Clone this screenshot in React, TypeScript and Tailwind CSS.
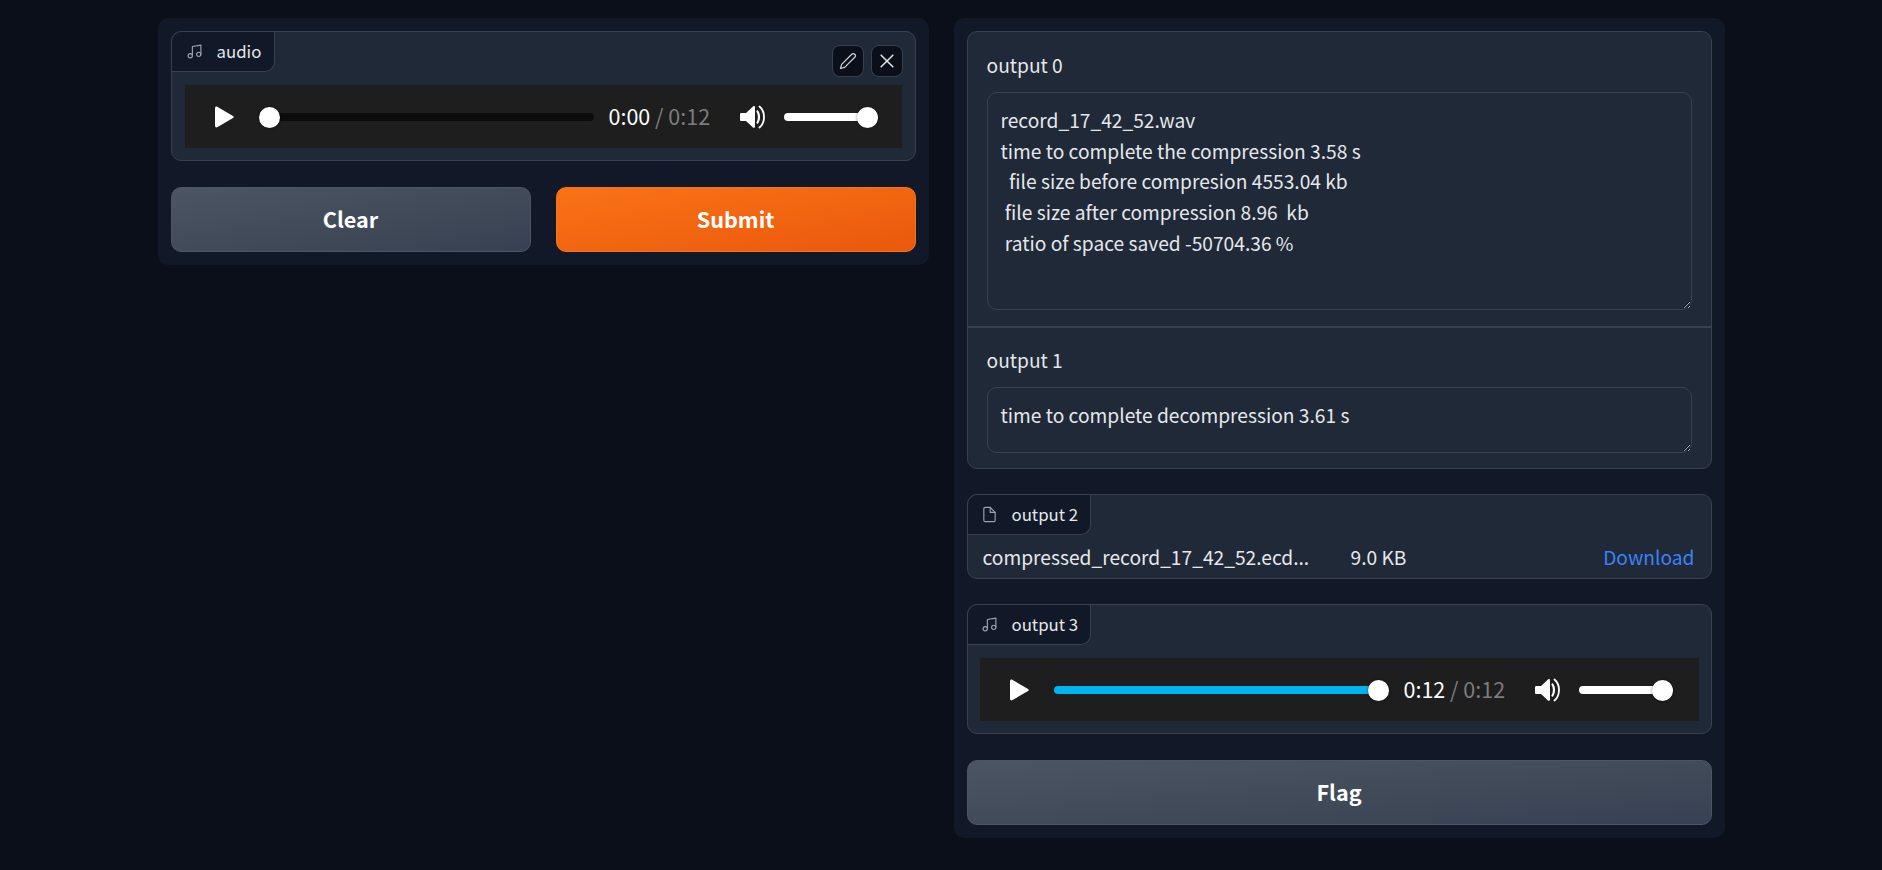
import React from "react";

const Music = () => (
  <svg width="17" height="17" viewBox="0 0 24 24" fill="none" stroke="currentColor" strokeWidth="1.6" strokeLinecap="round" strokeLinejoin="round" className="text-[#9ca3af] shrink-0">
    <path d="M9 18V5l12-2v13" />
    <circle cx="6" cy="18" r="3" />
    <circle cx="18" cy="16" r="3" />
  </svg>
);

const FileIcon = () => (
  <svg width="17" height="17" viewBox="0 0 24 24" fill="none" stroke="currentColor" strokeWidth="1.6" strokeLinecap="round" strokeLinejoin="round" className="text-[#9ca3af] shrink-0">
    <path d="M13 2H6a2 2 0 0 0-2 2v16a2 2 0 0 0 2 2h12a2 2 0 0 0 2-2V9z" />
    <polyline points="13 2 13 9 20 9" />
  </svg>
);

const Label = ({ icon, text, wide }: { icon: React.ReactNode; text: string; wide?: boolean }) => (
  <div className={`flex items-center h-10 bg-[#111827] border-r border-b border-[#374151] rounded-br-[10px] rounded-tl-[10px] text-[16.8px] text-[#e5e7eb] ${wide ? "w-[123px] pl-[13px] gap-[14px]" : "w-[103px] pl-[14px] gap-[14px]"}`}>
    {icon}
    <span className="leading-none -mt-px">{text}</span>
  </div>
);

const Player = ({ done, current }: { done?: boolean; current: string }) => (
  <div className="flex items-center h-[63px] bg-[#1e1e1e] pl-[29px]">
    <svg width="20" height="22" viewBox="0 0 20 22" className="shrink-0">
      <path d="M1 2.2 C1 0.6 2.4 0.2 3.6 0.9 L19 10 C20 10.6 20 11.4 19 12 L3.6 21.1 C2.4 21.8 1 21.400 1 19.800 Z" fill="#fff" />
    </svg>
    <div className="relative ml-[25px] w-[335px] h-5 flex items-center shrink-0">
      <div className={`h-2 w-full rounded-full ${done ? "bg-[#00b4f0]" : "bg-[#0b0b0b]"}`} />
      <div className={`absolute top-0 w-[21px] h-[21px] rounded-full bg-white shadow-[0_0_3px_rgba(0,0,0,0.5)] ${done ? "right-0" : "left-0"}`} />
    </div>
    <div className="ml-[15px] w-[120px] text-[21.5px] leading-none whitespace-pre -mt-px shrink-0">
      <span className="text-white">{current}</span>
      <span className="text-[#7d7d7d]"> / 0:12</span>
    </div>
    <svg width="26" height="24" viewBox="0 0 26 24" className="ml-[11px] shrink-0">
      <path d="M1 8 H6 L13 1.500 C14 0.700 15 1.200 15 2.500 V21.500 C15 22.800 14 23.300 13 22.500 L6 16 H1.500 C0.500 16 0 15.500 0 14.500 V9.500 C0 8.500 0.500 8 1.500 8 Z" fill="#fff" />
      <path d="M17.500 6.500 C19.500 9.500 19.500 14.500 17.500 17.500" fill="none" stroke="#fff" strokeWidth="2.200" strokeLinecap="round" />
      <path d="M19.500 1.500 C25.500 6.500 25.500 17.500 19.500 22.500" fill="none" stroke="#fff" strokeWidth="1.800" strokeLinecap="round" />
    </svg>
    <div className="relative ml-[18px] w-[94px] h-5 flex items-center shrink-0">
      <div className="h-2 w-full rounded-full bg-white" />
      <div className="absolute right-0 top-0 w-[21px] h-[21px] rounded-full bg-white shadow-[0_0_3px_rgba(0,0,0,0.5)]" />
    </div>
  </div>
);

const Btn = ({ text, primary, cls }: { text: string; primary?: boolean; cls?: string }) => (
  <button className={`h-[65px] rounded-[10px] border text-[21.6px] font-semibold text-white ${primary ? "bg-gradient-to-br from-[#f97316] to-[#ea580c] border-[#f97316]" : "bg-gradient-to-br from-[#4b5563] to-[#374151] border-[#4b5563]"} ${cls ?? ""}`}>
    {text}
  </button>
);

const output0 = `record_17_42_52.wav
time to complete the compression 3.58 s
  file size before compresion 4553.04 kb
 file size after compression 8.96  kb
 ratio of space saved -50704.36 %`;

const Field = ({ label, value, h }: { label: string; value: string; h: string }) => (
  <div className="px-[19px] pt-[19px]">
    <div className="text-[19.2px] leading-[28px] text-[#e5e7eb] mb-[13px]">{label}</div>
    <textarea
      readOnly
      defaultValue={value}
      className={`block w-full ${h} overflow-hidden rounded-[10px] border border-[#374151] bg-[#1f2937] px-[13px] py-[12px] text-[19.2px] leading-[30.7px] text-[#e5e7eb] outline-none`}
    />
  </div>
);

export default function App() {
  return (
    <div
      className="min-h-[870px] bg-[#0b0f19] flex justify-center items-start gap-[25px] pt-[18px] pl-[-1px]"
      style={{ fontFamily: '"Noto Sans CJK SC", "Noto Sans", sans-serif' }}
    >
      <div className="w-[771px] bg-[#111827] rounded-[10px] p-[13px]">
        <div className="relative h-[130px] bg-[#1f2937] border border-[#374151] rounded-[10px]">
          <Label icon={<Music />} text="audio" />
          <div className="absolute right-[12px] top-[13px] flex gap-[7px]">
            <div className="w-8 h-8 rounded-[8px] bg-[#0b0f19] border border-[#374151] flex items-center justify-center">
              <svg width="18" height="18" viewBox="0 0 24 24" fill="none" stroke="#d1d5db" strokeWidth="1.600" strokeLinecap="round" strokeLinejoin="round">
                <path d="M17 3a2.828 2.828 0 1 1 4 4L7.500 20.500 2 22l1.500-5.500L17 3z" />
              </svg>
            </div>
            <div className="w-8 h-8 rounded-[8px] bg-[#0b0f19] border border-[#374151] flex items-center justify-center">
              <svg width="20" height="20" viewBox="0 0 24 24" fill="none" stroke="#e5e7eb" strokeWidth="1.800" strokeLinecap="round" strokeLinejoin="round">
                <line x1="5" y1="5" x2="19" y2="19" />
                <line x1="19" y1="5" x2="5" y2="19" />
              </svg>
            </div>
          </div>
          <div className="mt-[13px] mx-[13px]">
            <Player current="0:00" />
          </div>
        </div>
        <div className="flex gap-[25px] mt-[26px]">
          <Btn text="Clear" cls="flex-1" />
          <Btn text="Submit" primary cls="flex-1" />
        </div>
      </div>

      <div className="w-[771px] bg-[#111827] rounded-[10px] p-[13px]">
        <div className="bg-[#1f2937] border border-[#374151] rounded-[10px] h-[438px]">
          <Field label="output 0" value={output0} h="h-[218px]" />
          <div className="h-[2px] bg-[#374151] mt-[16px]" />
          <div className="-mt-[1px]">
            <Field label="output 1" value="time to complete decompression 3.61 s" h="h-[66px]" />
          </div>
        </div>

        <div className="mt-[25px] h-[85px] bg-[#1f2937] border border-[#374151] rounded-[10px]">
          <Label icon={<FileIcon />} text="output 2" wide />
          <div className="flex items-center h-[44px] pl-[15px] pr-[16px] text-[19.2px] text-[#e5e7eb]">
            <span className="w-[368px]">compressed_record_17_42_52.ecd...</span>
            <span>9.0 KB</span>
            <span className="ml-auto text-[#3b82f6]">Download</span>
          </div>
        </div>

        <div className="mt-[25px] h-[130px] bg-[#1f2937] border border-[#374151] rounded-[10px]">
          <Label icon={<Music />} text="output 3" wide />
          <div className="mt-[13px] mx-[12px]">
            <Player done current="0:12" />
          </div>
        </div>

        <div className="flex mt-[26px]">
          <Btn text="Flag" cls="flex-1" />
        </div>
      </div>
    </div>
  );
}
